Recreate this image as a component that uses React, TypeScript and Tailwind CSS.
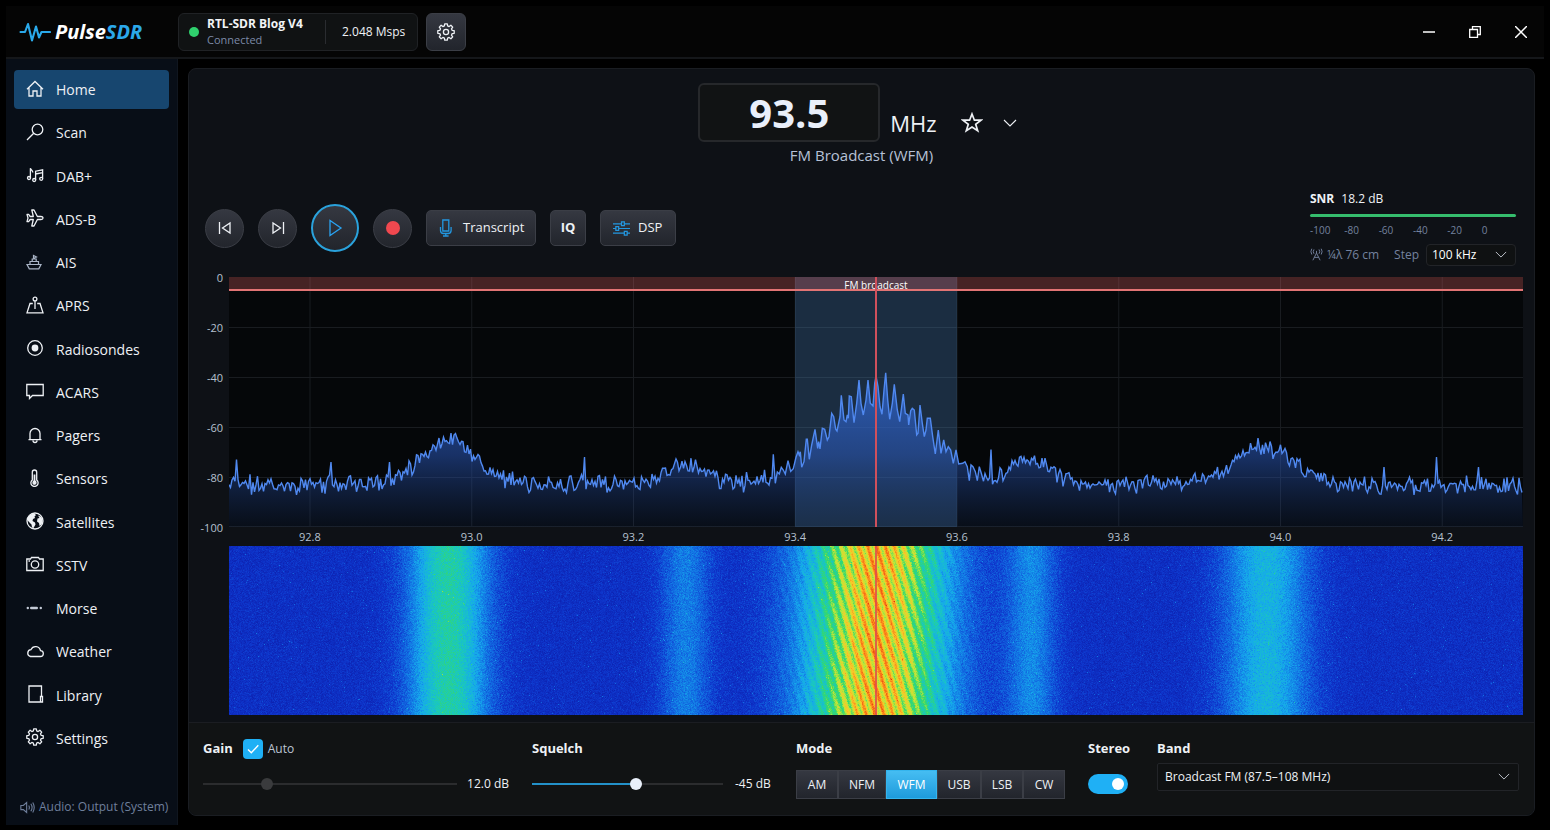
import { useEffect, useRef, useState } from 'react';
import type { ReactNode } from 'react';

const PLOT_W = 1294;
const PLOT_H = 250;
const FALL_H = 169;

// small seeded generator so every sweep looks the same
function makeRandom(seed: number) {
  let s = seed;
  return () => {
    s = (s * 1664525 + 1013904223) >>> 0;
    return s / 4294967296;
  };
}

// station humps: centre px, height dB, width px
const HUMPS = [
  [219, 18, 27],
  [456, 8, 20],
  [647, 37, 46],
  [802, 10, 20],
  [1037, 15, 30],
];

// narrow carriers: px, level dB
const SPURS = [
  [8, -73], [102, -74], [160, -74], [355, -72], [762, -69], [1155, -76], [1207, -72], [1250, -76],
];

const CARRIER = [
  [100, 553], [106, 640], [112, 606], [118, 612], [124, 592], [130, 600], [136, 612], [144, 572], [152, 604],
  [160, 596], [168, 562], [174, 545], [178, 555], [181, 545], [185, 592], [192, 575], [199, 508], [202, 508],
  [208, 568], [215, 525], [225, 478], [233, 535], [236, 515], [240, 537], [247, 475], [254, 478], [262, 510],
  [267, 500], [275, 430], [281, 440], [287, 478], [291, 483], [300, 440], [304, 376], [312, 450], [318, 455],
  [322, 435], [325, 445], [328, 378], [334, 380], [342, 458], [350, 400], [357, 330], [363, 400], [370, 435],
  [378, 390], [384, 330], [391, 400], [399, 408], [404, 340], [408, 318], [414, 350], [420, 410], [426, 433],
  [432, 360], [437, 308], [443, 390], [449, 448], [457, 400], [463, 343], [472, 420], [479, 455], [485, 410],
  [490, 372], [496, 430], [504, 435], [506, 465], [512, 422], [517, 415], [523, 420], [530, 495], [534, 490],
  [540, 405], [547, 460], [553, 500], [558, 480], [562, 445], [571, 445], [578, 500], [586, 552], [595, 480],
  [603, 550], [611, 510], [618, 545], [625, 530], [632, 540], [640, 580], [648, 540], [656, 582], [668, 580],
  [675, 575], [682, 590], [688, 632], [693, 585], [699, 590], [706, 605], [712, 632], [718, 590], [724, 610],
];

function levelAt(x: number) {
  return HUMPS.reduce((sum, [c, h, w]) => sum + h * Math.exp(-((x - c) ** 2) / (2 * w * w)), -83);
}

function buildTrace() {
  const random = makeRandom(71);
  const points: string[] = [];
  let carrierDone = false;
  for (let x = 0; x <= PLOT_W; x += 1.5) {
    if (x >= 544 && x <= 753) {
      if (!carrierDone) {
        CARRIER.forEach(([bin, level]) => points.push(`${(511 + bin / 3).toFixed(1)},${(level / 3 - 7).toFixed(1)}`));
        carrierDone = true;
      }
      continue;
    }
    const swing = random() + random() - 1;
    let db = levelAt(x) + swing * 4.5;
    const spur = SPURS.find(([px]) => Math.abs(px - x) < 0.8);
    if (spur) db = spur[1];
    points.push(`${x},${(-db * 2.5).toFixed(1)}`);
  }
  return points.join(' L');
}

const TRACE = buildTrace();

const HEAT = [
  [12, 30, 172], [14, 54, 204], [18, 110, 226], [22, 168, 236], [26, 200, 190],
  [52, 216, 110], [190, 230, 56], [250, 200, 40], [250, 120, 24], [226, 48, 16],
];

function heat(v: number) {
  const t = Math.max(0, Math.min(0.9999, v)) * (HEAT.length - 1);
  const i = Math.floor(t);
  const f = t - i;
  return HEAT[i].map((c, k) => c + (HEAT[i + 1][k] - c) * f);
}

function Waterfall() {
  const ref = useRef<HTMLCanvasElement>(null);

  useEffect(() => {
    const ctx = ref.current?.getContext('2d');
    if (!ctx) return;
    const random = makeRandom(9);
    const image = ctx.createImageData(PLOT_W, FALL_H);
    for (let y = 0; y < FALL_H; y++) {
      for (let x = 0; x < PLOT_W; x++) {
        const envelope = 0.08
          + 0.4 * Math.exp(-(((x - 219) / 28) ** 2) / 2)
          + 0.17 * Math.exp(-(((x - 456) / 18) ** 2) / 2)
          + 0.7 * Math.exp(-(((x - 647) / 50) ** 2) / 2)
          + 0.19 * Math.exp(-(((x - 802) / 18) ** 2) / 2)
          + 0.29 * Math.exp(-(((x - 1037) / 30) ** 2) / 2);
        const near = Math.exp(-(((x - 647) / 42) ** 2) / 2);
        const stripe = Math.cos(((x - 647 - y * 0.31) / 8.9) * Math.PI * 2) * 0.12 * near;
        let v = envelope + stripe + (random() + random() - 1) * 0.065;
        if (random() > 0.997) v += 0.12;
        const [r, g, b] = heat(v);
        const o = (y * PLOT_W + x) * 4;
        image.data[o] = r;
        image.data[o + 1] = g;
        image.data[o + 2] = b;
        image.data[o + 3] = 255;
      }
    }
    ctx.putImageData(image, 0, 0);
    ctx.fillStyle = 'rgba(225, 75, 75, 0.85)';
    ctx.fillRect(646, 0, 2, FALL_H);
  }, []);

  return <canvas ref={ref} width={PLOT_W} height={FALL_H} aria-label="Waterfall" className="block min-h-0 w-full flex-1" />;
}

function Spectrum() {
  const columns = [0, 1, 2, 3, 4, 5, 6, 7];
  return (
    <div className="relative">
      <svg viewBox={`0 0 ${PLOT_W} ${PLOT_H}`} preserveAspectRatio="none" className="block h-[250px] w-full bg-[#050709]">
        <defs>
          <linearGradient id="fill" x1="0" y1="90" x2="0" y2="250" gradientUnits="userSpaceOnUse">
            <stop offset="0" stopColor="#3470e0" stopOpacity="0.78" />
            <stop offset="0.55" stopColor="#2c5cc4" stopOpacity="0.5" />
            <stop offset="1" stopColor="#1f4288" stopOpacity="0.12" />
          </linearGradient>
        </defs>
        {columns.map((c) => (
          <path key={c} d={`M${81 + c * 161.75} 0V250`} stroke="#191c20" />
        ))}
        {[50, 100, 150, 200, 249].map((y) => (
          <path key={y} d={`M0 ${y + 0.5}H1294`} stroke="#191c20" />
        ))}
        <rect x="566" y="0" width="162" height="250" fill="#4a7fb8" fillOpacity="0.32" />
        <path d={`M0,250 L${TRACE} L1294,250 Z`} fill="url(#fill)" />
        <path d={`M${TRACE}`} fill="none" stroke="#5089f0" strokeWidth="1.4" />
        <rect x="0" y="0" width="1294" height="13" fill="#f06a6a" fillOpacity="0.28" />
        <rect x="0" y="12" width="1294" height="2" fill="#e27474" />
      </svg>
      <span className="absolute inset-x-0 top-0 text-center text-[10px] leading-4 text-white">FM broadcast</span>
      <div className="absolute inset-y-0 left-1/2 w-[2px] -translate-x-1/2 bg-[#d0505c]" />
    </div>
  );
}

function Icon({ children, className = 'size-[18px]' }: { children: ReactNode; className?: string }) {
  return (
    <svg viewBox="0 0 18 18" fill="none" stroke="currentColor" strokeWidth="1.3" className={`shrink-0 ${className}`} aria-hidden="true">
      {children}
    </svg>
  );
}

function gearPath() {
  const points: string[] = [];
  for (let i = 0; i < 8; i++) {
    [[-15, 6.3], [-9, 8.3], [9, 8.3], [15, 6.3]].forEach(([deg, r]) => {
      const a = ((i * 45 + deg) * Math.PI) / 180;
      points.push(`${(9 + r * Math.sin(a)).toFixed(2)} ${(9 - r * Math.cos(a)).toFixed(2)}`);
    });
  }
  return `M${points.join('L')}Z`;
}

const gear = (
  <>
    <path d={gearPath()} strokeLinejoin="round" />
    <circle cx="9" cy="9" r="2.6" />
  </>
);

const NAV: { label: string; icon: ReactNode }[] = [
  { label: 'Home', icon: <path d="M1 9.3 9 1.5l8 7.8M3 7.5V16h4v-5h4v5h4V7.5" /> },
  { label: 'Scan', icon: <><circle cx="11.5" cy="6.5" r="5.3" /><path d="M7.7 10.3 1 17" /></> },
  { label: 'DAB+', icon: <><path d="M4.4 12V2.2c.3 1.8 2.4 2 2.4 4.2M9.6 14V5.2l7-1.4v8.8M9.6 8l7-1.4" /><circle cx="3" cy="12" r="1.5" /><circle cx="8.2" cy="14" r="1.5" /><circle cx="15.2" cy="12.8" r="1.5" /></> },
  { label: 'ADS-B', icon: <path d="M17 9c0-1-1-1.5-2-1.5h-3.600L8 1H5.800l1.500 6.500H4.200L2.600 5.400H1L2 9l-1 3.600h1.600l1.600-2.100h3.100L5.800 17H8l3.400-6.500H15c1 0 2-.5 2-1.500Z" strokeLinejoin="round" /> },
  { label: 'AIS', icon: <g stroke="#a9b4c6" strokeWidth="1.2"><path d="M1 11.500h14l-2.200 4.300H3.300ZM4 11.500V8.500h8.500v3M6.200 8.500V6h4v2.500M7.500 6V2.500l3 1.500-3 1.500" /></g> },
  { label: 'APRS', icon: <><circle cx="9" cy="3" r="1.9" /><path d="M9 5v8M6.800 7.500H4L1 16.800h16L14 7.500h-2.800" /></> },
  { label: 'Radiosondes', icon: <><circle cx="9" cy="9" r="7.3" /><circle cx="9" cy="9" r="3.4" fill="currentColor" stroke="none" /></> },
  { label: 'ACARS', icon: <path d="M.8 2.500h16.400v11H6.500L3.500 16.500v-3H.8Z" /> },
  { label: 'Pagers', icon: <path d="M2.500 13.700h13M4 13.700V7.500a5 5 0 0 1 10 0v6.200M7 14.500a2 2 0 0 0 4 0" /> },
  { label: 'Sensors', icon: <><path d="M6.300 11V3.200a2.200 2.200 0 0 1 4.400 0V11a3.600 3.600 0 1 1-4.400 0Z" /><path d="M8.500 5.500v8" strokeWidth="1.800" /><circle cx="8.500" cy="13.700" r="1.500" fill="currentColor" /></> },
  { label: 'Satellites', icon: <><circle cx="9" cy="9" r="8" /><path d="M2 5c1.500-2 4-3.600 6.500-3.600L10 3 8.500 4.500 9 6 7 7l-.5 2L9 10.500l.5 2-2 3.500-1.500-.5-.5-3L3 10 1.300 8ZM12 3.500l3.500 1.500 1.200 4-1 3.500L13.500 14l-.5-3-2-1.500.5-3 2-.5Z" fill="currentColor" stroke="none" /></> },
  { label: 'SSTV', icon: <><path d="M.8 4h3.700l1-1.500h7l1 1.500h3.700v11.500H.8Z" /><circle cx="9" cy="9.500" r="3.700" /><path d="M2.500 6h1.500" /></> },
  { label: 'Morse', icon: <g fill="#c3cad6" stroke="none"><circle cx="1.800" cy="9" r="1.200" /><rect x="4" y="7.800" width="8" height="2.400" rx="1.200" /><circle cx="14.800" cy="9" r="1.200" /></g> },
  { label: 'Weather', icon: <path d="M4.500 14.500h9.800a2.900 2.900 0 0 0 .2-5.800A5 5 0 0 0 5 7.600 3.500 3.500 0 0 0 4.500 14.500Z" /> },
  { label: 'Library', icon: <path d="M3 1h12.500v10.500h-1V17H3ZM14.500 11.500h2V17h-2" /> },
  { label: 'Settings', icon: gear },
];

const MODES = ['AM', 'NFM', 'WFM', 'USB', 'LSB', 'CW'];

const raised = 'border border-[#3b3e46] bg-linear-to-b from-[#353841] to-[#22252c] text-[#eef1f5]';
const slider =
  'h-3 min-w-0 flex-1 appearance-none bg-[length:100%_2px] bg-center bg-no-repeat [&::-webkit-slider-thumb]:size-3 [&::-webkit-slider-thumb]:appearance-none [&::-webkit-slider-thumb]:rounded-full';

function Chevron({ className }: { className: string }) {
  return (
    <svg viewBox="0 0 14 8" fill="none" stroke="currentColor" strokeWidth="1.1" className={className} aria-hidden="true">
      <path d="m1 1 6 6 6-6" />
    </svg>
  );
}

function Header() {
  return (
    <header className="flex h-[53px] items-center border-b-2 border-[#15171a] bg-[#050505]">
      <div className="flex w-[172px] items-center gap-1 pl-[13px]">
        <svg viewBox="0 0 32 22" className="h-[22px] w-8" fill="none" stroke="#2aa9ea" strokeWidth="2.100" strokeLinejoin="round" strokeLinecap="round" aria-hidden="true">
          <path d="M1.500 11H6l3-8 4 16.500L17 5.500l3 11 2.500-5.500h8.500" />
        </svg>
        <h1 className="text-[20px] leading-6 font-bold text-white italic">
          Pulse<span className="text-[#2ba8ea]">SDR</span>
        </h1>
      </div>
      <div className="flex h-[38px] items-center rounded-md border border-[#202225] bg-[#101213] pr-3 pl-[10px]">
        <span className="size-[10px] rounded-full bg-[#2fd06d]" />
        <div className="ml-2 w-[118px]">
          <p className="text-[12px] leading-4 font-bold text-[#f2f4f7]">RTL-SDR Blog V4</p>
          <p className="text-[11px] leading-4 text-[#7c8aa8]">Connected</p>
        </div>
        <span className="h-6 w-px bg-[#2a2c30]" />
        <span className="pl-4 text-[12px] text-[#eef1f5]">2.048 Msps</span>
      </div>
      <button type="button" aria-label="Device settings" className={`ml-2 grid h-[38px] w-10 place-items-center rounded-md ${raised}`}>
        <Icon>{gear}</Icon>
      </button>
      <div className="ml-auto flex text-white">
        <button type="button" aria-label="Minimise" className="grid h-8 w-[46px] place-items-center">
          <svg viewBox="0 0 12 12" className="size-3" stroke="currentColor" strokeWidth="1.500"><path d="M0 6h12" /></svg>
        </button>
        <button type="button" aria-label="Restore" className="grid h-8 w-[46px] place-items-center">
          <svg viewBox="0 0 12 12" className="size-3" fill="none" stroke="currentColor" strokeWidth="1.300"><path d="M.7 3.500h7.800v7.800H.7ZM3.500 3.500V.7h7.800v7.800H8.500" /></svg>
        </button>
        <button type="button" aria-label="Close" className="grid h-8 w-[46px] place-items-center">
          <svg viewBox="0 0 12 12" className="size-3" stroke="currentColor" strokeWidth="1.500"><path d="m0 0 12 12M12 0 0 12" /></svg>
        </button>
      </div>
    </header>
  );
}

function Sidebar() {
  return (
    <aside className="flex w-[172px] shrink-0 flex-col border-r border-[#10161f] bg-[#080e17] pt-[11px]">
      <nav className="flex flex-1 flex-col justify-between px-2">
        {NAV.map(({ label, icon }) => (
          <a
            key={label}
            href={`#${label}`}
            className={`flex h-[39px] items-center gap-3 rounded px-3 text-[14px] text-[#eef1f5] ${label === 'Home' ? 'bg-[#17466f]' : ''}`}
          >
            <Icon className="mb-[2px] size-[18px]">{icon}</Icon>
            {label}
          </a>
        ))}
      </nav>
      <p className="flex h-[67px] items-center gap-1 pt-[31px] pl-[14px] text-[12px] text-[#6f7f9c]">
        <Icon className="size-[15px]">
          <path d="M1 6.500h3L8 3v12l-4-3.500H1ZM10.500 6.500q1.500 2.500 0 5M13 4.500q3 4.500 0 9M15.300 3q3.500 6 0 12" />
        </Icon>
        Audio: Output (System)
      </p>
    </aside>
  );
}

function Tuner() {
  const [frequency, setFrequency] = useState('93.5');
  return (
    <section className="flex flex-col items-center pt-[14px]">
      <div className="flex">
        <input
          aria-label="Frequency"
          value={frequency}
          onChange={(e) => setFrequency(e.target.value)}
          className="h-[59px] w-[182px] rounded-md border-2 border-[#26282b] bg-[#111314] text-center text-[40px] font-bold text-[#e9effa]"
        />
        <div className="flex items-center pt-5 text-[#eef1f5]">
          <span className="ml-[10px] text-[22px] leading-8">MHz</span>
          <button type="button" aria-label="Add to favourites" className="ml-6">
            <svg viewBox="0 0 22 22" className="size-[22px]" fill="none" stroke="currentColor" strokeWidth="1.700" aria-hidden="true">
              <path d="m11 2 2.400 6.200h6.600l-5.300 4.100 2 6.500L11 15l-5.700 3.800 2-6.500L2 8.200h6.600Z" />
            </svg>
          </button>
          <button type="button" aria-label="More bands" className="grid w-[42px] place-items-center pl-3">
            <Chevron className="h-2 w-[14px]" />
          </button>
        </div>
      </div>
      <p className="mt-[3px] text-[15px] leading-5 text-[#b6c1d6]">FM Broadcast (WFM)</p>
    </section>
  );
}

function Transport() {
  return (
    <section className="mt-[25px] flex h-[76px] items-center justify-between pr-[18px] pl-4">
      <div className="flex items-center gap-[14px] text-[13px]">
        <button type="button" aria-label="Previous" className={`grid size-[39px] place-items-center rounded-full ${raised}`}>
          <Icon><path d="M3.500 3v12M14 4v10L6.500 9Z" /></Icon>
        </button>
        <button type="button" aria-label="Next" className={`grid size-[39px] place-items-center rounded-full ${raised}`}>
          <Icon><path d="M14.500 3v12M4 4v10L11.500 9Z" /></Icon>
        </button>
        <button type="button" aria-label="Play" className="grid size-12 place-items-center rounded-full border-2 border-[#2aa2dc] bg-linear-to-b from-[#353841] to-[#22252c] text-[#2aa2f0]">
          <Icon><path d="M4 1.500v15L15 9Z" /></Icon>
        </button>
        <button type="button" aria-label="Record" className={`grid size-[39px] place-items-center rounded-full ${raised}`}>
          <span className="size-[14px] rounded-full bg-[#f0484f]" />
        </button>
        <button type="button" className={`flex h-9 w-[110px] items-center gap-2 rounded-[5px] pl-[10px] ${raised}`}>
          <Icon className="size-[18px] text-[#2397e0]">
            <path d="M5.800 1h6v11h-6ZM3.500 8v3.500q0 3 3 3h4.600q3 0 3-3V8M8.800 14.500V17M6 17h5.600" />
          </Icon>
          Transcript
        </button>
        <button type="button" className={`h-9 w-9 rounded-[5px] font-bold ${raised}`}>IQ</button>
        <button type="button" className={`flex h-9 w-[76px] items-center gap-2 rounded-[5px] pl-3 ${raised}`}>
          <Icon className="size-[17px] text-[#2397e0]">
            <path d="M0 4h9M12 4h6M0 9h3M6 9h12M0 14h12M15 14h3M9 2h3v4H9ZM3 7h3v4H3ZM12 12h3v4h-3Z" />
          </Icon>
          DSP
        </button>
      </div>

      <div className="w-[206px] text-[12px] text-[#74829f]">
        <p className="leading-4 text-[#eef1f5]">
          <b className="mr-[7px]">SNR</b>18.2 dB
        </p>
        <div role="meter" aria-label="SNR" aria-valuenow={18.2} className="mt-[7px] h-[3px] rounded-full bg-[#35bd6d]" />
        <div className="mt-[5px] grid grid-cols-6 text-[10px] leading-4">
          {[-100, -80, -60, -40, -20, 0].map((t) => <span key={t}>{t}</span>)}
        </div>
        <div className="mt-[6px] flex items-center">
          <Icon className="mr-1 size-[13px]">
            <path d="M4 17 9 7l5 10M6 13h6M9 7V4M5.500 2q-2 3 0 6M12.500 2q2 3 0 6M2.500 1q-2.500 4 0 8M15.500 1q2.500 4 0 8" />
          </Icon>
          ¼λ 76 cm
          <label htmlFor="step" className="ml-auto">Step</label>
          <div className="relative ml-[7px] h-[22px] w-[90px]">
            <select id="step" className="h-full w-full appearance-none rounded border border-[#222428] bg-[#0f1112] pl-[5px] text-[12px] text-white">
              <option>100 kHz</option>
            </select>
            <Chevron className="pointer-events-none absolute top-[7px] right-[9px] h-[7px] w-3 text-[#c3c8d0]" />
          </div>
        </div>
      </div>
    </section>
  );
}

function Bands() {
  return (
    <section className="mt-[11px] mb-[7px] flex flex-1 gap-[6px] pr-[11px] text-[11px] text-[#b6c1d0]">
      <div className="-mt-[7px] flex h-[266px] w-[34px] flex-col justify-between text-right leading-4">
        {[0, -20, -40, -60, -80, -100].map((t) => <span key={t}>{t}</span>)}
      </div>
      <div className="flex min-w-0 flex-1 flex-col">
        <Spectrum />
        <div className="grid h-[19px] grid-cols-8 text-center leading-[19px]">
          {['92.8', '93.0', '93.2', '93.4', '93.6', '93.8', '94.0', '94.2'].map((f) => <span key={f}>{f}</span>)}
        </div>
        <Waterfall />
      </div>
    </section>
  );
}

function Controls() {
  const [mode, setMode] = useState('WFM');
  const [auto, setAuto] = useState(true);
  const [stereo, setStereo] = useState(true);
  const [squelch, setSquelch] = useState(-45);

  return (
    <section className="grid h-[93px] grid-cols-[306fr_241fr_269px_46px_362fr] gap-x-[23px] rounded-b-lg border-t border-[#1b1d22] bg-[#111314] pt-[14px] pr-[15px] pl-[14px] text-[13px] text-[#eef1f5]">
      <div>
        <div className="flex h-6 items-center">
          <label htmlFor="gain" className="font-bold">Gain</label>
          <label className="ml-[10px] flex items-center gap-[5px] text-[12px] text-[#bcc5d4]">
            <span className="grid size-5">
              <input type="checkbox" checked={auto} onChange={(e) => setAuto(e.target.checked)} className="peer col-start-1 row-start-1 size-5 appearance-none rounded bg-[#2a2d33] checked:bg-[#1fb0f5]" />
              <svg viewBox="0 0 20 20" className="pointer-events-none col-start-1 row-start-1 hidden size-5 peer-checked:block" fill="none" stroke="white" strokeWidth="1.400" aria-hidden="true">
                <path d="m5 10.500 3.300 3.300 7-7.500" />
              </svg>
            </span>
            Auto
          </label>
        </div>
        <div className="mt-[2px] flex h-[42px] items-center gap-[10px]">
          <input id="gain" type="range" min={0} max={50} defaultValue={12} disabled={auto} className={`${slider} bg-[linear-gradient(#2b2c2e,#2b2c2e)] [&::-webkit-slider-thumb]:bg-[#3a3b3d]`} />
          <span className="text-[12px]">12.0 dB</span>
        </div>
      </div>
      <div>
        <label htmlFor="squelch" className="flex h-6 items-center font-bold">Squelch</label>
        <div className="mt-[2px] flex h-[42px] items-center">
          <input
            id="squelch"
            type="range"
            min={-100}
            max={0}
            value={squelch}
            onChange={(e) => setSquelch(Number(e.target.value))}
            style={{ backgroundImage: `linear-gradient(90deg, #2391c9 ${100 + squelch}%, #2b2c2e ${100 + squelch}%)` }}
            className={`${slider} [&::-webkit-slider-thumb]:bg-[#e9effa]`}
          />
          <span className="w-[50px] pl-3 text-[12px]">{squelch} dB</span>
        </div>
      </div>
      <div>
        <h2 className="flex h-6 items-center font-bold">Mode</h2>
        <div className="mt-[9px] grid h-[29px] grid-cols-[42fr_48fr_51fr_44fr_42fr_42fr] text-[12px]">
          {MODES.map((m) => (
            <button
              key={m}
              type="button"
              aria-pressed={m === mode}
              onClick={() => setMode(m)}
              className={m === mode ? 'border border-[#35b5ee] bg-linear-to-b from-[#45bdf2] to-[#1d9bdc] text-white' : raised}
            >
              {m}
            </button>
          ))}
        </div>
      </div>
      <div>
        <label htmlFor="stereo" className="flex h-6 items-center font-bold">Stereo</label>
        <input
          id="stereo"
          type="checkbox"
          role="switch"
          checked={stereo}
          onChange={(e) => setStereo(e.target.checked)}
          className="mt-[13px] flex h-5 w-10 appearance-none items-center rounded-full bg-[#2a2d33] px-1 before:size-3 before:rounded-full before:bg-white checked:justify-end checked:bg-[#1fb0f5]"
        />
      </div>
      <div>
        <label htmlFor="band" className="flex h-6 items-center font-bold">Band</label>
        <div className="relative mt-[2px] h-7">
          <select id="band" className="h-full w-full appearance-none rounded-xs border border-[#222428] bg-[#0f1112] pl-[7px] text-[12px]">
            <option>Broadcast FM (87.5–108 MHz)</option>
          </select>
          <Chevron className="pointer-events-none absolute top-[10px] right-[9px] h-[7px] w-3 text-[#c3c8d0]" />
        </div>
      </div>
    </section>
  );
}

export default function App() {
  return (
    <div className="flex min-h-screen flex-col bg-black p-[6px] font-['Open_Sans','Noto_Sans',sans-serif]">
      <Header />
      <div className="flex flex-1">
        <Sidebar />
        <main className="flex min-w-0 flex-1 flex-col py-[9px] pr-[9px] pl-[10px]">
          <div className="flex flex-1 flex-col rounded-lg border border-[#1a1d22] bg-[#0e1116]">
            <Tuner />
            <Transport />
            <Bands />
            <Controls />
          </div>
        </main>
      </div>
    </div>
  );
}
